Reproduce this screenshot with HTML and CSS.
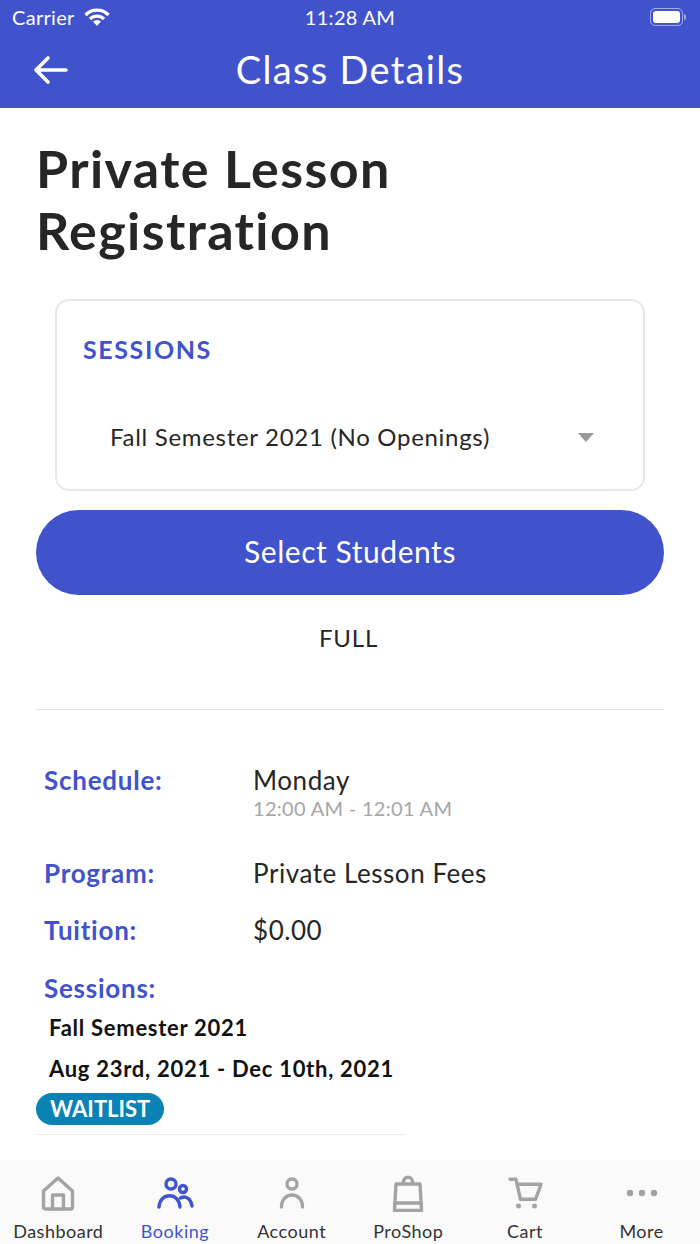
FILE: index.html
```html
<!DOCTYPE html>
<html>
<head>
  <title>Class Details</title>
  <link rel="stylesheet" href="styles.css">
</head>
<body>

<div id="app">
  <header>
    <div class="status">
      <div class="status-left">
        <span>Carrier</span>
        <svg width="26" height="19" viewBox="0 0 26 19">
          <path d="M1.5 7 A16 16 0 0 1 24.5 7" class="wifi"/>
          <path d="M6 11 A10 10 0 0 1 20 11" class="wifi"/>
          <path d="M13 18 L9 13.5 A6 6 0 0 1 17 13.5 Z" fill="#fff"/>
        </svg>
      </div>
      <div class="status-time">11:28 AM</div>
      <div class="status-right">
        <div class="battery"><div class="battery-fill"></div></div>
        <div class="battery-tip"></div>
      </div>
    </div>
    <div class="nav">
      <svg class="back" width="36" height="30" viewBox="0 0 36 30">
        <path d="M33 15 H4 M15 3 L3 15 L15 27" />
      </svg>
      <div class="nav-title">Class Details</div>
    </div>
  </header>

  <div id="main">
    <h1>Private Lesson Registration</h1>

    <div class="card">
      <div class="card-label">SESSIONS</div>
      <div class="select">
        <span>Fall Semester 2021 (No Openings)</span>
        <div class="caret"></div>
      </div>
    </div>

    <button class="primary">Select Students</button>
    <div class="full">FULL</div>
    <hr class="divider">

    <div class="row row-schedule">
      <div class="label">Schedule:</div>
      <div>
        <div class="value">Monday</div>
        <div class="time">12:00 AM - 12:01 AM</div>
      </div>
    </div>
    <div class="row row-program">
      <div class="label">Program:</div>
      <div class="value">Private Lesson Fees</div>
    </div>
    <div class="row row-tuition">
      <div class="label">Tuition:</div>
      <div class="value">$0.00</div>
    </div>
    <div class="label sessions-label">Sessions:</div>
    <div class="session-line">Fall Semester 2021</div>
    <div class="session-line">Aug 23rd, 2021 - Dec 10th, 2021</div>
    <span class="badge">WAITLIST</span>
    <hr class="divider-short">
  </div>

  <nav class="tabs">
    <div class="tab">
      <svg width="38" height="38" viewBox="0 0 38 38" class="ico">
        <path d="M4.5 17 L19 4 L33.5 17 V33 a2 2 0 0 1 -2 2 H6.5 a2 2 0 0 1 -2 -2 Z"/>
        <path d="M13.5 35 V21 H24.5 V35"/>
      </svg>
      <span>Dashboard</span>
    </div>
    <div class="tab active">
      <svg width="38" height="38" viewBox="0 0 38 38" class="ico">
        <circle cx="15" cy="10" r="5"/>
        <circle cx="27" cy="15" r="3.5"/>
        <path d="M3 33 C4 18 23 18 24 33"/>
        <path d="M24.500 24 C30 21 35 25 36 32"/>
      </svg>
      <span>Booking</span>
    </div>
    <div class="tab">
      <svg width="38" height="38" viewBox="0 0 38 38" class="ico">
        <circle cx="19" cy="10" r="5"/>
        <path d="M8.500 33 C8.500 17 29.500 17 29.500 33"/>
      </svg>
      <span>Account</span>
    </div>
    <div class="tab">
      <svg width="38" height="38" viewBox="0 0 38 38" class="ico">
        <path d="M7 10 H31 L32.500 36.500 H5.500 Z"/>
        <path d="M6 29 H32"/>
        <path d="M14 10 C14 1 24 1 24 10"/>
      </svg>
      <span>ProShop</span>
    </div>
    <div class="tab">
      <svg width="38" height="38" viewBox="0 0 38 38" class="ico">
        <path d="M4 5.300 H10 L14.500 25.300 H29.500 L35 10.300 H11"/>
        <circle cx="12.500" cy="32" r="2.500" class="dot"/>
        <circle cx="28.500" cy="32" r="2.500" class="dot"/>
      </svg>
      <span>Cart</span>
    </div>
    <div class="tab">
      <svg width="38" height="38" viewBox="0 0 38 38" class="ico">
        <circle cx="7" cy="19" r="3.200" class="dot"/>
        <circle cx="19" cy="19" r="3.200" class="dot"/>
        <circle cx="31" cy="19" r="3.200" class="dot"/>
      </svg>
      <span>More</span>
    </div>
  </nav>
</div>

</body>
</html>
```

FILE: styles.css
```css
body {
  font-family: Lato, "Noto Sans", sans-serif;
  margin: 0;
  padding: 0;
  background-color: white;
  color: #262626;
}

#app {
  width: 700px;
  height: 1244px;
  display: flex;
  flex-direction: column;
  overflow: hidden;
}

header {
  background-color: #4153cc;
  color: white;
  height: 108px;
  flex-shrink: 0;
}

.status {
  height: 36px;
  display: flex;
  align-items: center;
  justify-content: space-between;
  padding: 0 14px 2px 12px;
  box-sizing: border-box;
  font-size: 20px;
  letter-spacing: 0.3px;
  position: relative;
}

.status-left {
  display: flex;
  align-items: center;
  gap: 9px;
}

.wifi {
  fill: none;
  stroke: white;
  stroke-width: 3.4;
}

.status-time {
  position: absolute;
  left: 0;
  right: 0;
  text-align: center;
}

.status-right {
  display: flex;
  align-items: center;
  gap: 1px;
}

.battery {
  width: 33px;
  height: 18px;
  border: 1px solid rgba(255,255,255,0.5);
  border-radius: 5px;
  padding: 2px;
  box-sizing: border-box;
}

.battery-fill {
  height: 100%;
  background-color: white;
  border-radius: 3px;
}

.battery-tip {
  width: 2px;
  height: 6px;
  background-color: rgba(255,255,255,0.5);
  border-radius: 0 2px 2px 0;
}

.nav {
  height: 72px;
  display: flex;
  align-items: center;
  justify-content: center;
  position: relative;
  padding-bottom: 6px;
  box-sizing: border-box;
}

.back {
  position: absolute;
  left: 33px;
  top: 19px;
  fill: none;
  stroke: white;
  stroke-width: 3.6;
  stroke-linecap: round;
  stroke-linejoin: round;
}

.nav-title {
  font-size: 38px;
  letter-spacing: 1.3px;
}

#main {
  flex: 1;
  padding: 0 36px;
}

h1 {
  font-size: 52px;
  font-weight: 700;
  line-height: 62px;
  letter-spacing: 1.4px;
  margin: 29px 0 38px 0;
  width: 420px;
}

.card {
  margin: 0 19px;
  height: 192px;
  box-sizing: border-box;
  border: 2px solid #e8e8e8;
  border-radius: 14px;
  padding: 34px 26px 0;
}

.card-label {
  color: #4153cc;
  font-size: 25px;
  font-weight: 700;
  letter-spacing: 1.6px;
  line-height: 28px;
}

.select {
  margin-top: 60px;
  padding: 0 23px 0 27px;
  display: flex;
  align-items: center;
  justify-content: space-between;
  font-size: 24px;
  line-height: 28px;
  letter-spacing: 0.7px;
}

.caret {
  width: 0;
  height: 0;
  border-left: 8px solid transparent;
  border-right: 8px solid transparent;
  border-top: 9px solid #999;
}

button.primary {
  display: block;
  width: 100%;
  height: 85px;
  margin-top: 19px;
  background-color: #4153cc;
  color: white;
  border: none;
  border-radius: 43px;
  font-family: inherit;
  font-size: 30px;
  letter-spacing: 0.55px;
  padding-bottom: 4px;
}

.full {
  text-align: center;
  font-size: 24px;
  line-height: 28px;
  letter-spacing: 0.8px;
  margin-top: 29px;
  margin-right: 3px;
}

.divider {
  border: none;
  border-top: 1px solid #e4e4e4;
  margin: 57px 0 0;
}

.row {
  display: flex;
  padding-left: 8px;
}

.row .label {
  width: 209px;
  flex-shrink: 0;
}

.label {
  color: #4153cc;
  font-size: 26px;
  font-weight: 700;
  line-height: 30px;
  letter-spacing: 0.75px;
}

.value {
  font-size: 26px;
  line-height: 30px;
  letter-spacing: 0.55px;
}

.time {
  color: #a6a6a6;
  font-size: 20px;
  line-height: 26px;
  letter-spacing: 0.3px;
}

.row-schedule {
  margin-top: 55px;
}

.row-program {
  margin-top: 37px;
}

.row-tuition {
  margin-top: 27px;
}

.sessions-label {
  margin: 28px 0 0 8px;
}

.session-line {
  color: #111;
  font-size: 22px;
  font-weight: 700;
  line-height: 26px;
  letter-spacing: 0.72px;
  margin: 12px 0 0 13px;
}

.session-line + .session-line {
  margin-top: 15px;
}

.badge {
  display: inline-block;
  background-color: #0a82b4;
  color: white;
  font-size: 22px;
  font-weight: 700;
  line-height: 32px;
  padding: 0 14px;
  border-radius: 16px;
  margin-top: 11px;
}

.divider-short {
  border: none;
  border-top: 1px solid #eeeeee;
  margin: 9px 0 0;
  width: 370px;
}

.tabs {
  height: 84px;
  flex-shrink: 0;
  background-color: #fafafa;
  display: flex;
}

.tab {
  width: 116.66px;
  display: flex;
  flex-direction: column;
  align-items: center;
  padding-top: 14px;
  box-sizing: border-box;
  font-size: 18px;
  line-height: 22px;
  letter-spacing: 0.5px;
  color: #333;
}

.ico {
  fill: none;
  stroke: #a3a3a3;
  stroke-width: 3.4;
  stroke-linejoin: round;
  stroke-linecap: round;
  margin-bottom: 8px;
}

.ico .dot {
  fill: #a3a3a3;
  stroke: none;
}

.tab.active {
  color: #4153cc;
}

.tab.active .ico {
  stroke: #4153cc;
}
```
